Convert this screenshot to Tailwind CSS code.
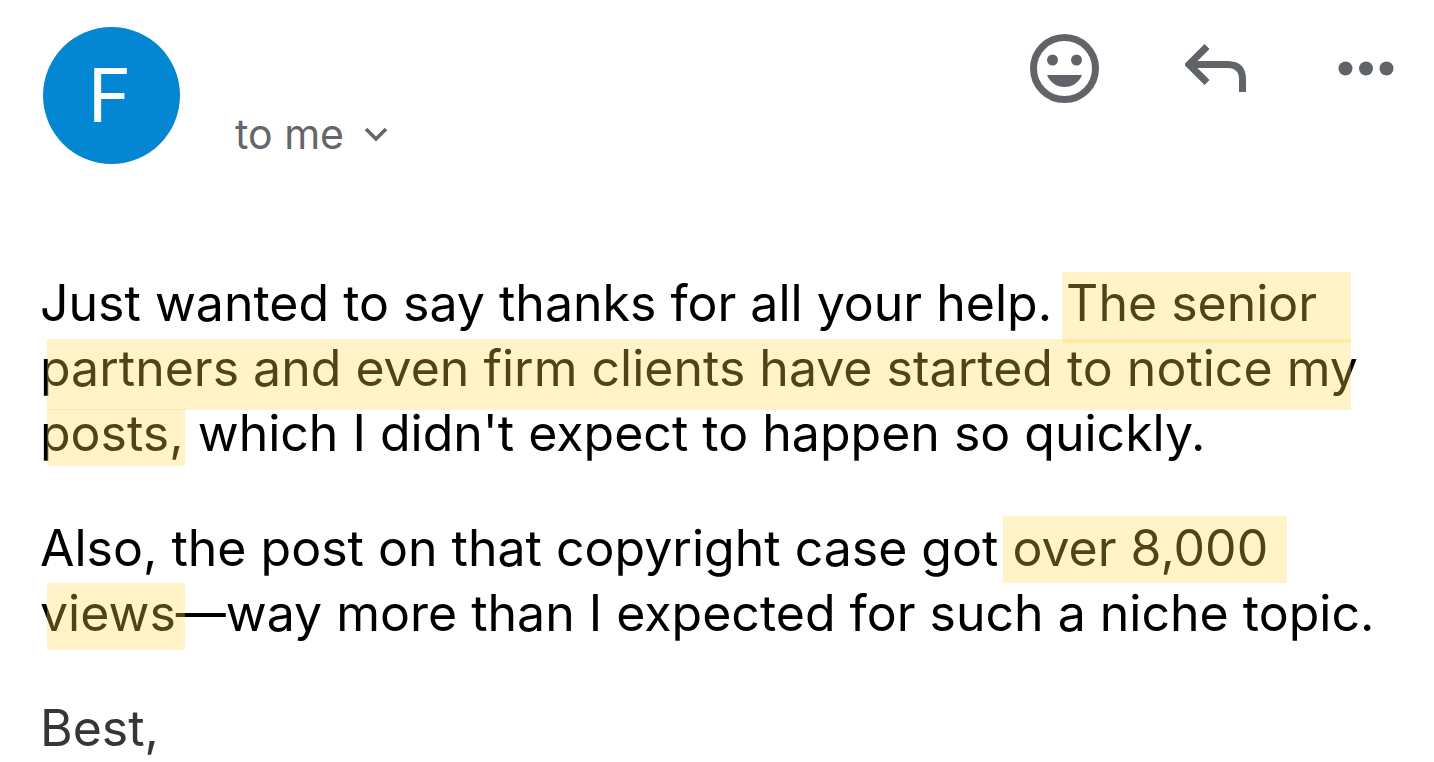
<!DOCTYPE html>
<html lang="en">

<head>
    <meta charset="utf-8">
    <meta name="viewport" content="width=device-width, initial-scale=1">
    <title>Message</title>
    <script src="https://cdn.jsdelivr.net/npm/@tailwindcss/browser@4"></script>
</head>

<body class="bg-white font-['Inter','Liberation_Sans',sans-serif] overflow-hidden">
    <header class="flex items-start justify-between pl-[43px] pr-10 pt-[27px]">
        <div class="flex items-end gap-[55px]">
            <div class="flex size-[137px] items-center justify-center rounded-full bg-[#0487d3] pr-1 text-[74px] text-white">F</div>
            <button class="flex items-center gap-5 text-[41px] leading-[60px] text-[#646669]">
                to me
                <svg class="h-4 w-6" viewBox="0 0 24 16" fill="none" stroke="currentColor" stroke-width="3.500">
                    <path d="M2 3l10 10L22 3" />
                </svg>
            </button>
        </div>
        <div class="flex items-center text-[#606367]">
            <button class="mt-[7px]" aria-label="Add reaction">
                <svg class="size-[69px]" viewBox="0 0 69 69" fill="currentColor">
                    <circle cx="34.500" cy="34.500" r="31" fill="none" stroke="currentColor" stroke-width="7" />
                    <circle cx="22.500" cy="26" r="5.500" />
                    <circle cx="46.500" cy="26" r="5.500" />
                    <path d="M17 41h35C49 48.500 42.500 53 34.500 53S20 48.500 17 41z" />
                </svg>
            </button>
            <button class="ml-[86px] mt-[7px]" aria-label="Reply">
                <svg class="h-[69px] w-[62px]" viewBox="0 0 62 69" fill="none" stroke="currentColor" stroke-width="7">
                    <path d="M22 12.500L4 30.500l18 18M5 30.500h38Q57.500 31 57.500 45v13" />
                </svg>
            </button>
            <button class="ml-[91px] mt-[7px]" aria-label="More options">
                <svg class="h-[69px] w-14" viewBox="0 0 56 69" fill="currentColor">
                    <circle cx="7.500" cy="34.500" r="7" />
                    <circle cx="28" cy="34.500" r="7" />
                    <circle cx="48.500" cy="34.500" r="7" />
                </svg>
            </button>
        </div>
    </header>

    <main class="mt-[107px] flex flex-col gap-[50px] pl-10 text-[50px] leading-[65px] text-black whitespace-nowrap">
        <!-- marker strips lie over the text, so they tint the letters too -->
        <p class="relative">
            Just wanted to say thanks for all your help. The senior<br>
            partners and even firm clients have started to notice my<br>
            posts, which I didn't expect to happen so quickly.
            <span class="absolute left-[1022px] top-px h-[71px] w-[289px] bg-[#ffd754]/31"></span>
            <span class="absolute left-[7px] top-[68px] h-[71px] w-[1304px] bg-[#ffd754]/31"></span>
            <span class="absolute left-[7px] top-[138px] h-[57px] w-[138px] bg-[#ffd754]/31"></span>
        </p>
        <p class="relative">
            Also, the post on that copyright case got over 8,000<br>
            views—way more than I expected for such a niche topic.
            <span class="absolute left-[963px] top-0 h-[67px] w-[284px] bg-[#ffd754]/31"></span>
            <span class="absolute left-[7px] top-[67px] h-[67px] w-[138px] bg-[#ffd754]/31"></span>
        </p>
        <p class="text-[#363636]">Best,</p>
    </main>
</body>

</html>
